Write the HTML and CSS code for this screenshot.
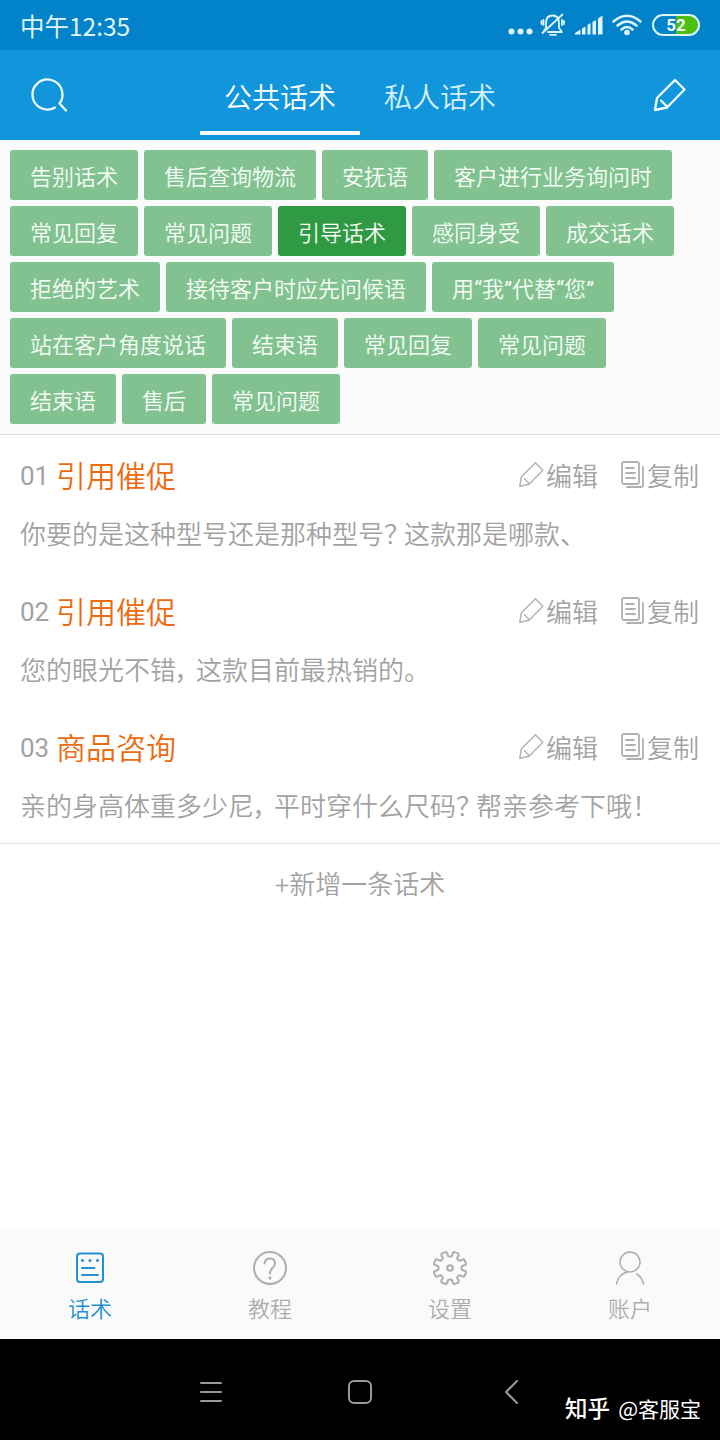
FILE: index.html
```
<!DOCTYPE html>
<html lang="zh-CN">
<head>
    <meta charset="UTF-8">
    <meta name="viewport" content="width=device-width, initial-scale=1.0">
    <title>公共话术</title>
    <link rel="stylesheet" href="styles.css">
</head>
<body>
    <!-- shared icons -->
    <svg class="defs" width="0" height="0">
        <symbol id="pen" viewBox="0 0 32 34">
            <path d="M21 2 L30.5 11.5 L13 29.5 L1 32 L3 20 Z M7 22.5 L12.5 28"/>
        </symbol>
        <symbol id="copy" viewBox="0 0 24 28">
            <rect x="1" y="1" width="17" height="22" rx="2"/>
            <path d="M5 7 H13 M5 12 H14 M5 17 H14 M22 6 V24 Q22 26 20 26 H6"/>
        </symbol>
    </svg>

    <div class="status">
        <span class="time">中午12:35</span>
        <svg class="status-icons" width="194" height="28" viewBox="0 0 194 28">
            <g fill="#dff6ff">
                <circle cx="6.500" cy="20.500" r="3"/>
                <circle cx="15.500" cy="20.500" r="3"/>
                <circle cx="24.500" cy="20.500" r="3"/>
                <path d="M70 23.500 V22 L75.500 18.500 V23.500 Z M77 23.500 V17.500 L80.500 15.500 V23.500 Z M82.500 23.500 V14 L85.500 12 V23.500 Z M87.500 23.500 V11 L91 9 V23.500 Z M93 23.500 V7.500 L97.500 4.500 V23.500 Z"/>
                <circle cx="122" cy="21.500" r="2.800"/>
            </g>
            <g fill="none" stroke="#dff6ff" stroke-width="1.800">
                <path d="M41 18 V12 Q41 4.500 47.500 4.500 Q54 4.500 54 12 V17 L57 21 H43 M41 17 L38.500 20.500 M37.500 22 L57.500 3.500 M45 23.800 H51 M38.500 9 V14 M36.500 10 V13 M57 9 V14 M59 10 V13"/>
                <path stroke-width="2.600" d="M108.500 10.500 Q122 -1 135.500 10.500 M112.500 14.500 Q122 6.500 131.500 14.500 M116.500 18.500 Q122 13.500 127.500 18.500"/>
            </g>
            <path fill="#4cbf10" d="M171 5 H185 A9 9 0 0 1 185 23 H171 Z"/>
            <rect x="148" y="4" width="46" height="20" rx="10" fill="none" stroke="#dff6ff" stroke-width="2"/>
            <text class="battery" x="171" y="19.800" text-anchor="middle">52</text>
        </svg>
    </div>

    <div class="header">
        <svg class="search" width="36" height="36" viewBox="0 0 36 36">
            <path d="M23 30.500 A15 15 0 1 1 27.500 26.500 L34 33.500"/>
        </svg>
        <div class="tabs">
            <div class="tab active">公共话术</div>
            <div class="tab">私人话术</div>
        </div>
        <svg class="edit" width="32" height="34"><use href="#pen"/></svg>
    </div>

    <div class="tags">
        <span class="tag">告别话术</span>
        <span class="tag">售后查询物流</span>
        <span class="tag">安抚语</span>
        <span class="tag">客户进行业务询问时</span>
        <span class="tag">常见回复</span>
        <span class="tag">常见问题</span>
        <span class="tag current">引导话术</span>
        <span class="tag">感同身受</span>
        <span class="tag">成交话术</span>
        <span class="tag">拒绝的艺术</span>
        <span class="tag">接待客户时应先问候语</span>
        <span class="tag">用<span class="quote">“</span>我<span class="quote">”</span>代替<span class="quote">“</span>您<span class="quote">”</span></span>
        <span class="tag">站在客户角度说话</span>
        <span class="tag">结束语</span>
        <span class="tag">常见回复</span>
        <span class="tag">常见问题</span>
        <span class="tag">结束语</span>
        <span class="tag">售后</span>
        <span class="tag">常见问题</span>
    </div>

    <div class="list">
        <div class="item">
            <div class="item-head">
                <span class="num">01</span>
                <span class="title">引用催促</span>
                <span class="action"><svg width="25" height="27"><use href="#pen"/></svg><span>编辑</span></span>
                <span class="action"><svg width="24" height="28"><use href="#copy"/></svg><span>复制</span></span>
            </div>
            <p>你要的是这种型号还是那种型号<span class="mark">？</span>这款那是哪款、</p>
        </div>
        <div class="item">
            <div class="item-head">
                <span class="num">02</span>
                <span class="title">引用催促</span>
                <span class="action"><svg width="25" height="27"><use href="#pen"/></svg><span>编辑</span></span>
                <span class="action"><svg width="24" height="28"><use href="#copy"/></svg><span>复制</span></span>
            </div>
            <p>您的眼光不错<span class="mark">，</span>这款目前最热销的。</p>
        </div>
        <div class="item">
            <div class="item-head">
                <span class="num">03</span>
                <span class="title">商品咨询</span>
                <span class="action"><svg width="25" height="27"><use href="#pen"/></svg><span>编辑</span></span>
                <span class="action"><svg width="24" height="28"><use href="#copy"/></svg><span>复制</span></span>
            </div>
            <p>亲的身高体重多少尼<span class="mark">，</span>平时穿什么尺码<span class="mark">？</span>帮亲参考下哦<span class="mark">！</span></p>
        </div>
    </div>

    <div class="add">+新增一条话术</div>

    <div class="nav">
        <div class="nav-item on">
            <svg width="36" height="36" viewBox="0 0 36 36">
                <rect x="5" y="3.500" width="26" height="28.500" rx="3"/>
                <path d="M10 18 H22.500 M10 25 H26"/>
                <path class="dots" d="M10.500 10.500 h0 M18 10.500 h0 M25.500 10.500 h0"/>
            </svg>
            <span>话术</span>
        </div>
        <div class="nav-item">
            <svg width="36" height="36" viewBox="0 0 36 36">
                <circle cx="18" cy="18" r="16"/>
                <path d="M12.500 13.500 Q13 8.500 18 8.500 Q23 8.500 23 13.500 Q23 16 20.500 18 Q18 20 18 23.500"/>
                <path class="dots" d="M18 28 h0"/>
            </svg>
            <span>教程</span>
        </div>
        <div class="nav-item">
            <svg width="36" height="36" viewBox="0 0 36 36">
                <path id="gear" d=""/>
                <circle cx="18" cy="18" r="2.800"/>
            </svg>
            <span>设置</span>
        </div>
        <div class="nav-item thin">
            <svg width="36" height="36" viewBox="0 0 36 36">
                <circle cx="18" cy="12" r="10"/>
                <path d="M4.500 34 Q6.500 24 15.500 22 M24.500 24 Q30 27 31.500 34"/>
            </svg>
            <span>账户</span>
        </div>
    </div>

    <div class="system">
        <svg width="24" height="26" viewBox="0 0 24 26"><path d="M2 4 H22 M2 13 H22 M2 22 H22"/></svg>
        <svg width="26" height="26" viewBox="0 0 26 26"><rect x="2" y="2" width="22" height="22" rx="5"/></svg>
        <svg width="26" height="26" viewBox="0 0 26 26"><path d="M20 2 L9 13 L20 24"/></svg>
        <div class="watermark"><b>知乎</b>@客服宝</div>
    </div>

    <script>
        // eight teeth with notches between them, for the settings icon
        const teeth = [];
        const point = (r, deg) => {
            const a = deg * Math.PI / 180;
            return (18 + r * Math.cos(a)).toFixed(1) + ' ' + (18 + r * Math.sin(a)).toFixed(1);
        };
        for (let i = 0; i < 8; i++) {
            const a = 22.5 + i * 45;
            teeth.push(
                (i ? 'L' : 'M') + point(12, a - 14),
                'L' + point(15.5, a - 11),
                'Q' + point(16.8, a - 10) + ' ' + point(16.6, a - 6),
                'L' + point(16.6, a + 6),
                'Q' + point(16.8, a + 10) + ' ' + point(15.5, a + 11),
                'L' + point(12, a + 14),
                'Q' + point(11, a + 22.5) + ' ' + point(12, a + 31)
            );
        }
        document.getElementById('gear').setAttribute('d', teeth.join(' ') + ' Z');
    </script>
</body>
</html>
```
FILE: styles.css
```
* { box-sizing: border-box; }
body { margin: 0; width: 720px; height: 1440px; display: flex; flex-direction: column; background: #fff; color: #a2a2a2; font-family: Roboto, "Noto Sans CJK SC", sans-serif; font-weight: 350; overflow: hidden; }
svg { display: block; flex: none; overflow: visible; fill: none; stroke: currentColor; stroke-width: 2; stroke-linejoin: round; stroke-linecap: round; }
.defs { position: absolute; }

.status { height: 50px; padding: 0 21px 0 20px; display: flex; justify-content: space-between; align-items: center; background: #0282c8; color: #dff6ff; }
.time { font-size: 24.500px; line-height: 50px; padding-top: 1px; font-family: "Noto Sans CJK SC", sans-serif; font-weight: 400; }
.status-icons { stroke: none; }
.battery { font: 700 17px Roboto, sans-serif; fill: #f2fcff; }

.header { height: 90px; padding: 0 34px 0 32px; display: flex; justify-content: space-between; align-items: center; background: #1195db; color: #f2fcff; }
.header svg { stroke-width: 2.3; }
.search { margin-right: -2px; }
.tabs { display: flex; align-self: stretch; }
.tab { width: 160px; height: 85px; padding-top: 6px; line-height: 85px; font-size: 28px; text-align: center; color: #d5f1ff; }
.tab.active { border-bottom: 4px solid #fff; color: #fff; }

.tags { height: 295px; padding: 10px; display: flex; flex-wrap: wrap; align-content: flex-start; gap: 6px; background: #fafafa; border-bottom: 1px solid #dcdcdc; }
.tag { height: 50px; padding: 0 20px; line-height: 55px; font-size: 22px; border-radius: 3px; background: #82c290; color: #f7fff7; white-space: nowrap; }
.tag.current { background: #2f9a43; }
.quote { display: inline-block; width: 8px; text-align: center; font-weight: 400; }

.list { border-bottom: 1px solid #e2e2e2; }
.item { height: 136px; padding: 11px 21px 0 20px; }
.item-head { display: flex; align-items: center; height: 60px; }
.num { font-size: 26px; width: 36px; font-weight: 400; }
.title { font-size: 30px; color: #eb6c10; margin: -4px auto 0 0; }
.action { display: flex; align-items: center; font-size: 26px; margin-left: 23px; }
.action span { margin-top: -4px; }
.action svg { margin: -3px 2px 0 0; stroke-width: 1.8; color: #b0b0b0; }
.item p { margin: 0; padding-top: 1px; font-size: 26px; line-height: 56px; white-space: nowrap; }
.mark { display: inline-block; width: 20px; font-feature-settings: "palt"; }

.add { flex: 1; padding-top: 21px; line-height: 40px; font-size: 26px; text-align: center; }

.nav { height: 111px; display: flex; background: #fafafa; }
.nav-item { flex: 1; padding-top: 22px; display: flex; flex-direction: column; align-items: center; font-size: 22px; line-height: 30px; color: #adadad; }
.nav-item span { margin-top: 9px; }
.nav-item.on { color: #2590d0; }
.nav-item.thin svg { stroke-width: 1.5; }
.nav-item .dots { stroke-width: 3; }

.system { height: 101px; padding: 4px 19px 0 199px; display: flex; align-items: center; background: #000; color: #999; }
.system svg + svg { margin-left: 124px; }
.watermark { margin: 30px 0 0 auto; color: #fff; font: 400 21px "Noto Sans CJK SC", sans-serif; white-space: nowrap; }
.watermark b { margin-right: 8px; font-size: 22.500px; font-weight: 500; }
```
